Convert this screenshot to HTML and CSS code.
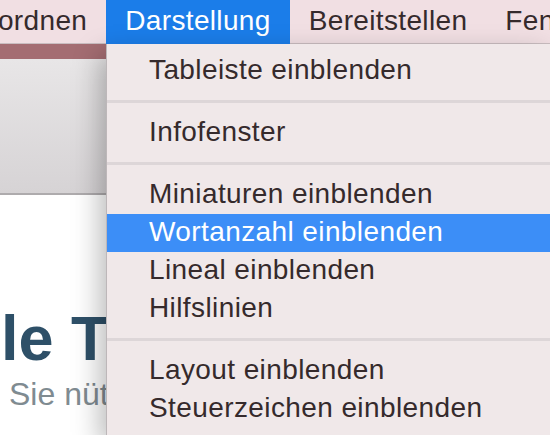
FILE: index.html
```html
<!DOCTYPE html>
<html lang="de">
<head>
    <meta charset="UTF-8">
    <meta name="viewport" content="width=device-width, initial-scale=1.0">
    <title>Darstellung</title>
    <link rel="stylesheet" href="styles.css">
</head>
<body>
    <div class="menubar">
        <div class="menubar-item">Anordnen</div>
        <div class="menubar-item active">Darstellung</div>
        <div class="menubar-item">Bereitstellen</div>
        <div class="menubar-item">Fenster</div>
    </div>

    <div class="window">
        <div class="titlestrip"></div>
        <div class="toolbar"></div>
        <div class="document">
            <h1 class="doc-title">Alle Titel</h1>
            <p class="doc-subtitle">Sie nützen</p>
        </div>
    </div>

    <div class="dropdown">
        <div class="menu-item">Tableiste einblenden</div>
        <div class="separator"></div>
        <div class="menu-item">Infofenster</div>
        <div class="separator"></div>
        <div class="menu-item">Miniaturen einblenden</div>
        <div class="menu-item selected">Wortanzahl einblenden</div>
        <div class="menu-item">Lineal einblenden</div>
        <div class="menu-item">Hilfslinien</div>
        <div class="separator"></div>
        <div class="menu-item">Layout einblenden</div>
        <div class="menu-item">Steuerzeichen einblenden</div>
    </div>
</body>
</html>
```

FILE: styles.css
```css
body {
    margin: 0;
    width: 550px;
    height: 435px;
    overflow: hidden;
    position: relative;
    font-family: "Liberation Sans", Arial, sans-serif;
    background-color: #ffffff;
}
.menubar {
    display: flex;
    height: 44px;
    margin-left: -56px;
    background-color: #f1dfe3;
    border-bottom: 1px solid #c9bdc0;
    box-sizing: border-box;
    white-space: nowrap;
}
.menubar-item {
    padding: 0 19px;
    font-size: 28px;
    letter-spacing: 0.35px;
    line-height: 42px;
    color: #352a2c;
}
.menubar-item.active {
    background-color: #1b7de9;
    color: #ffffff;
    height: 44px;
}
.window {
    display: flex;
    flex-direction: column;
}
.titlestrip {
    height: 15px;
    background-color: #a46d72;
}
.toolbar {
    height: 134px;
    background: linear-gradient(#e8e6e7, #d6d3d5);
    border-bottom: 2px solid #aeabad;
}
.document {
    padding-top: 110px;
    margin-left: -62px;
    white-space: nowrap;
}
.doc-title {
    margin: 0;
    font-size: 63px;
    line-height: 66px;
    font-weight: bold;
    color: #2e5068;
}
.doc-subtitle {
    margin: 5px 0 0 71px;
    font-size: 32px;
    color: #7f8b91;
}
.dropdown {
    position: absolute;
    left: 106px;
    top: 44px;
    right: 0;
    bottom: 0;
    padding-top: 8px;
    background-color: #f0e8e9;
    border-left: 1px solid #bdb7b9;
    box-shadow: -6px 10px 26px rgba(0, 0, 0, 0.28);
}
.menu-item {
    height: 38px;
    line-height: 36px;
    padding-left: 42px;
    font-size: 28px;
    letter-spacing: 0.4px;
    color: #352a2c;
    white-space: nowrap;
}
.menu-item.selected {
    background-color: #3c8ef7;
    color: #ffffff;
}
.separator {
    height: 3px;
    margin: 10px 0 11px;
    background-color: #ddd6d8;
}
```
